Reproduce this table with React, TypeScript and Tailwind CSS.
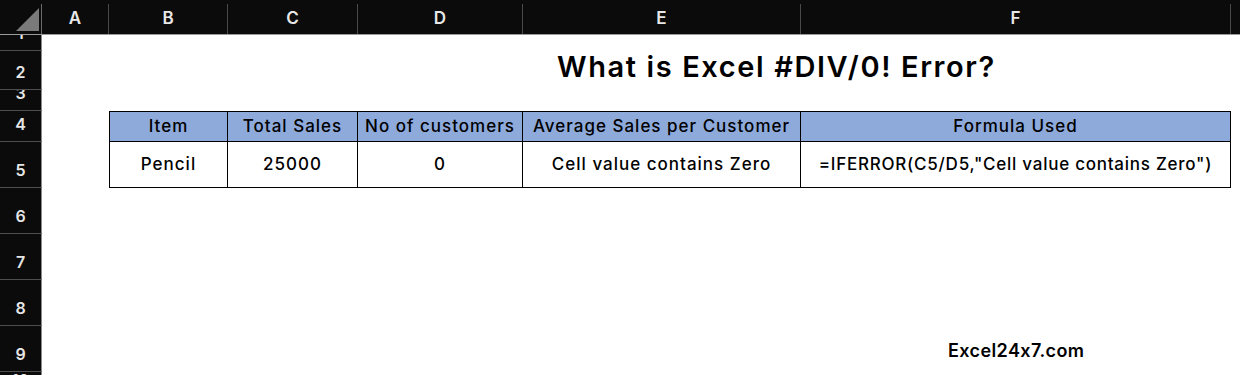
import React from "react";

interface Col {
  label: string;
  w: string;
}

const cols: Col[] = [
  { label: "A", w: "w-[67px]" },
  { label: "B", w: "w-[119px]" },
  { label: "C", w: "w-[130px]" },
  { label: "D", w: "w-[165px]" },
  { label: "E", w: "w-[278px]" },
  { label: "F", w: "w-[430px]" },
];

const font = { fontFamily: "Inter, 'Noto Sans', sans-serif" };

function RowLabel({ n }: { n: number }) {
  return (
    <div className="w-[42px] shrink-0 h-full bg-[#0b0b0b] border-r border-b border-r-[#8a8a8a] border-b-[#4e4e4e] flex items-end justify-center pb-[9px] overflow-hidden">
      <span className="text-[16px] leading-none font-semibold text-[#e6e6e6]">{n}</span>
    </div>
  );
}

const headers = ["Item", "Total Sales", "No of customers", "Average Sales per Customer", "Formula Used"];
const values = ["Pencil", "25000", "0", "Cell value contains Zero", '=IFERROR(C5/D5,"Cell value contains Zero")'];
const tableCols = ["w-[118px]", "w-[130px]", "w-[165px]", "w-[278px]", "w-[430px]"];

export default function App() {
  return (
    <div
      className="w-[1240px] h-[375px] bg-white overflow-hidden flex flex-col [font-feature-settings:'calt'_0]"
      style={font}
    >
      {/* column letters */}
      <div className="h-[35px] shrink-0 flex items-end bg-[#0b0b0b] border-b border-[#9b9b9b]">
        <div className="w-[42px] h-[30px] shrink-0 border-r border-[#6a6a6a] relative">
          <svg className="absolute left-0 top-[-5px]" width="42" height="35" viewBox="0 0 42 35">
            <polygon points="16,32 39,32 39,9" fill="#7a7a7a" />
          </svg>
        </div>
        {cols.map((c) => (
          <div
            key={c.label}
            className={`${c.w} h-[30px] shrink-0 border-r border-[#4a4a4a] flex items-center justify-center text-[17px] font-semibold text-[#e8e8e8]`}
          >
            {c.label}
          </div>
        ))}
        <div className="flex-1" />
      </div>

      {/* row 1 */}
      <div className="h-[16px] shrink-0 flex">
        <RowLabel n={1} />
      </div>

      {/* row 2: title */}
      <div className="h-[39px] shrink-0 flex">
        <RowLabel n={2} />
        <div className="flex-1 flex items-start pt-[1px] pl-[515px]">
          <span className="text-[29px] leading-none font-semibold text-black tracking-[1.6px] whitespace-nowrap">
            What is Excel #DIV/0! Error?
          </span>
        </div>
      </div>

      {/* row 3 */}
      <div className="h-[21px] shrink-0 flex">
        <RowLabel n={3} />
      </div>

      {/* row 4: table head */}
      <div className="h-[31px] shrink-0 flex">
        <RowLabel n={4} />
        <div className="w-[67px] shrink-0" />
        <div className="flex border-l border-t border-black">
          {headers.map((h, i) => (
            <div
              key={h}
              className={`${tableCols[i]} h-full shrink-0 bg-[#8eaadb] border-r border-b border-black flex items-center justify-center text-[17px] font-medium text-black tracking-[1px] whitespace-nowrap`}
            >
              {h}
            </div>
          ))}
        </div>
      </div>

      {/* row 5: table body */}
      <div className="h-[46px] shrink-0 flex">
        <RowLabel n={5} />
        <div className="w-[67px] shrink-0" />
        <div className="flex border-l border-black">
          {values.map((v, i) => (
            <div
              key={i}
              className={`${tableCols[i]} h-full shrink-0 border-r border-b border-black flex items-center justify-center text-[17px] font-medium text-black whitespace-nowrap ${
                i === 4 ? "tracking-[0.75px]" : "tracking-[1px]"
              }`}
            >
              {v}
            </div>
          ))}
        </div>
      </div>

      {[6, 7, 8].map((n) => (
        <div key={n} className="h-[46px] shrink-0 flex">
          <RowLabel n={n} />
        </div>
      ))}

      {/* row 9: site name */}
      <div className="h-[46px] shrink-0 flex">
        <RowLabel n={9} />
        <div className="flex-1 flex items-center pl-[906px] pt-[2px]">
          <span className="text-[18px] font-semibold text-black tracking-[0.4px]">Excel24x7.com</span>
        </div>
      </div>

      <div className="flex-1 flex">
        <RowLabel n={10} />
      </div>
    </div>
  );
}
